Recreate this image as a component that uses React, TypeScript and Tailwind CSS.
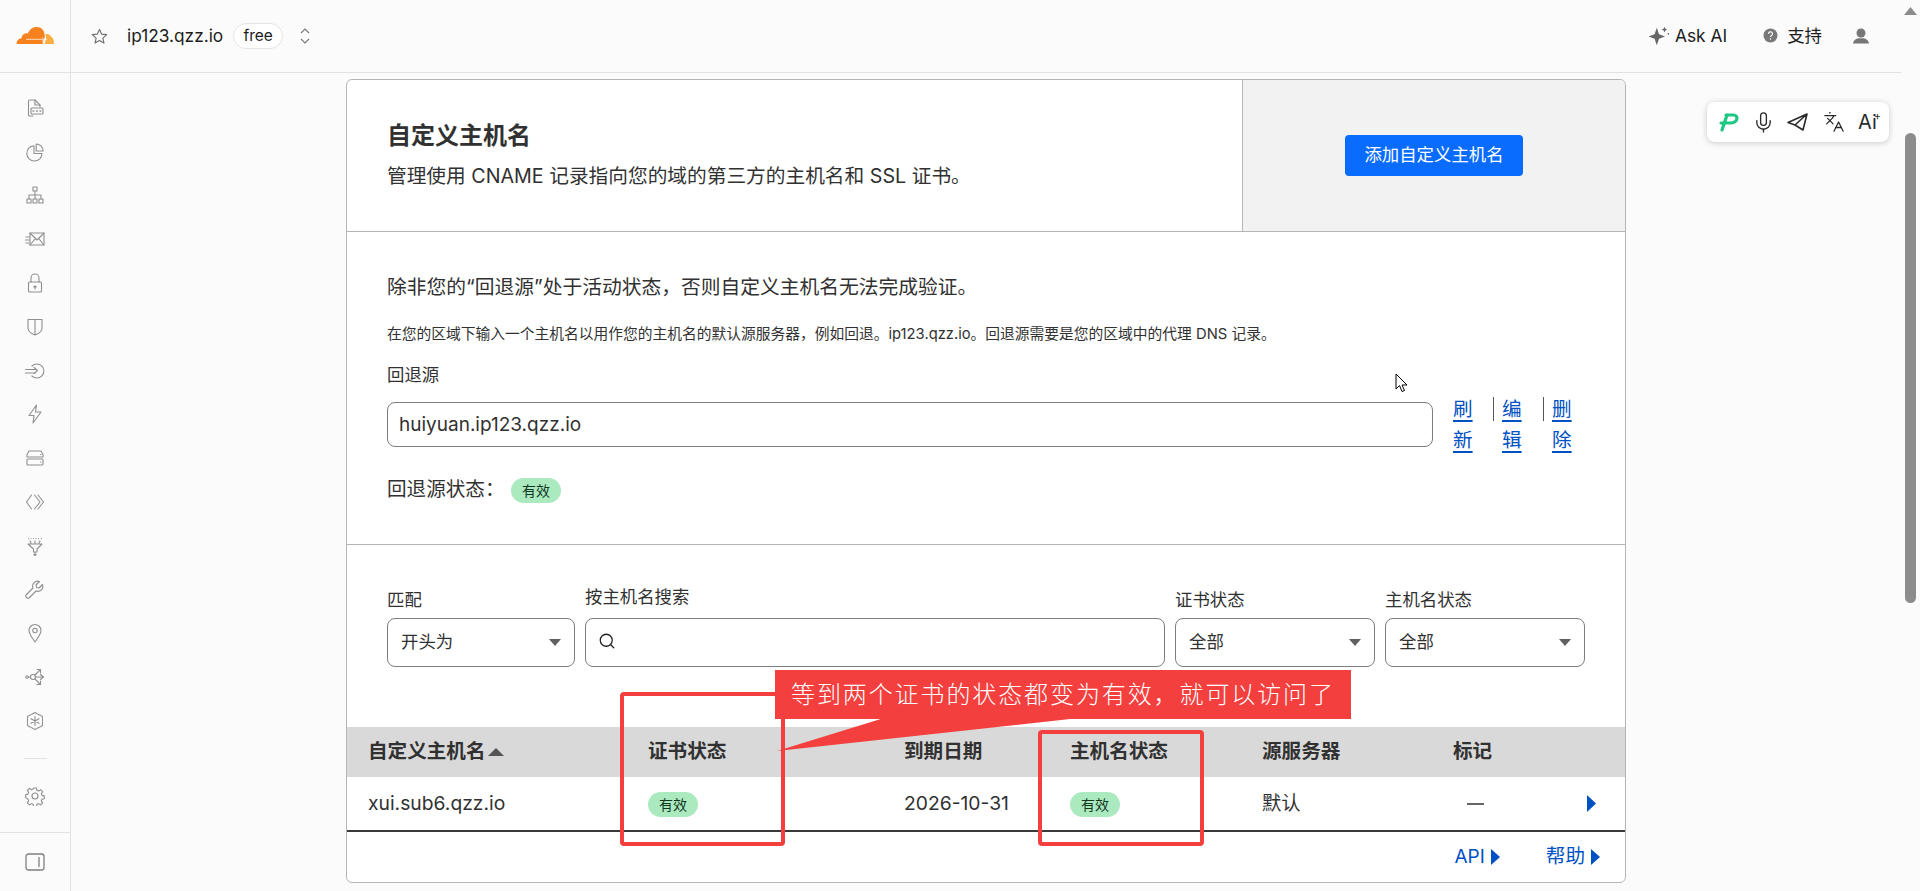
import React from "react";
import { Mic, Languages, Search } from "lucide-react";

const I = ({ children, size = 20, fill = "none" }: { children: React.ReactNode; size?: number; fill?: string }) => (
  <svg width={size} height={size} viewBox="0 0 20 20" fill={fill} stroke="#8f8f8f" strokeWidth="1.100" strokeLinecap="round" strokeLinejoin="round">
    {children}
  </svg>
);

const sideIcons: React.ReactNode[] = [
  <I key="doc"><path d="M8 18H4.500a1 1 0 0 1-1-1V3a1 1 0 0 1 1-1h5.500l5 5v2" /><path d="M10 2v5h5" /><rect x="6" y="10" width="12" height="6" rx="1" /><path d="M8 13h.8M11.500 13h.8M15 13h.8" strokeWidth="1.400" /></I>,
  <I key="pie"><path d="M9 3.800A7.600 7.600 0 1 0 17 11.500H9z" /><path d="M11.200 2a7.200 7.200 0 0 1 7 7h-7z" /></I>,
  <I key="tree"><rect x="8" y="2" width="4" height="4" /><rect x="2" y="14" width="4" height="4" /><rect x="8" y="14" width="4" height="4" /><rect x="14" y="14" width="4" height="4" /><path d="M10 6v8M4 14v-4h12v4" /></I>,
  <I key="mail"><rect x="5" y="4" width="14" height="12" /><path d="m5 4 7 7 7-7M5 16l5-6M19 16l-5-6M1 8h3M0 11h4M1 14h3" /></I>,
  <I key="lock"><rect x="3.500" y="9" width="13" height="10" rx="1" /><path d="M6 9V5a4 4 0 0 1 8 0v4M10 16v-3M8.800 14l1.200-1.200 1.200 1.200" /></I>,
  <I key="shield"><path d="M3 2.500h14v8.500c0 3.500-3.500 5.700-7 7-3.500-1.300-7-3.500-7-7zM10 2.500V18" /></I>,
  <I key="in"><path d="M7 5a7 7 0 1 1 0 10M0.500 8.500h11M0.500 12h10M9 6.500l3.500 3-3.500 3" /></I>,
  <I key="bolt"><path d="M11.500 1 4 11.500h5L8 19l8-11h-5.500z" /></I>,
  <I key="drives"><path d="M2 9V6.500L4 3h12l2 3.500V9z" /><rect x="2" y="11" width="16" height="6" rx="1" /><path d="M15.500 6.500h.5M15.500 14h.5" /></I>,
  <I key="workers"><path d="M6.500 3 1.500 10l5 7M9.500 3l5.500 7-5.500 7M13 3l5.500 7-5.500 7" /></I>,
  <I key="funnel"><path d="M3 8h14l-5 5v3H8.500v-3zM3.500 2.500v.1M6 2.500v.1M8.500 2.500v.1M11 2.500v.1M13.500 2.500v.1M16.500 2.500v.1M5 5l1 2M10 5v2M15 5l-1 2M10 16v3.500M8.800 18.500l1.200 1 1.200-1" /></I>,
  <I key="wrench"><path d="M17.500 4.500 14 8l-2.500-.5L11 5l3.500-3.500a5 5 0 0 0-6.500 6.500L1.500 14.500a2 2 0 0 0 3 3L11 11a5 5 0 0 0 6.500-6.500z" /></I>,
  <I key="pin"><path d="M10 19c-3-4.500-6-8-6-11.500a6 6 0 0 1 12 0C16 11 13 14.500 10 19z" /><circle cx="10" cy="7.500" r="2.200" /></I>,
  <I key="node"><circle cx="2" cy="10" r="1.300" /><circle cx="8" cy="10" r="2.500" /><path d="M3.500 10h2M10.500 10H18M15.500 7.500 18.500 10l-3 2.500M10 8l5-5M12 2.500h3.500V6M10 12l5 5M12 17.500h3.500V14" /></I>,
  <I key="hex"><path d="M10 1.500 17.500 5.500v9L10 18.500 2.500 14.500v-9z" strokeDasharray="2.500 1" /><path d="M10 5.500v9M6 7.700l8 4.600M14 7.700l-8 4.600" /></I>,
];

const Tri = ({ dir, cls }: { dir: "up" | "down" | "right"; cls: string }) => (
  <svg className={cls} viewBox="0 0 10 10" preserveAspectRatio="none">
    {dir === "up" && <path d="M0 10 5 0l5 10z" fill="currentColor" />}
    {dir === "down" && <path d="M0 0h10L5 10z" fill="currentColor" />}
    {dir === "right" && <path d="M0 0v10l10-5z" fill="currentColor" />}
  </svg>
);

const Badge = () => (
  <span className="inline-flex items-center justify-center w-[50px] h-[25px] rounded-full bg-[#abeabf] text-[#12361f] text-[14px]">有效</span>
);

const Select = ({ label, value, cls }: { label: string; value: string; cls: string }) => (
  <div className={cls}>
    <div className="text-[17.400px] leading-[24px] mb-[6px]">{label}</div>
    <div className="h-[49px] rounded-[8px] border border-[#7d7d7d] bg-white flex items-center justify-between pl-[13px] pr-[13px] text-[17.400px]">
      <span>{value}</span>
      <Tri dir="down" cls="w-[12px] h-[7px] text-[#5f5f5f]" />
    </div>
  </div>
);

const LinkWord = ({ a, b }: { a: string; b: string }) => (
  <a className="block w-[20px] text-[19.600px] leading-[31px] text-[#0051c3] underline decoration-[2px] underline-offset-[4px]">
    {a}
    <br />
    {b}
  </a>
);

const colCls = "grid grid-cols-[280px_256px_166px_192px_191px_1fr]";

export default function App() {
  return (
    <div className="relative flex w-[1920px] h-[891px] overflow-hidden bg-[#fbfbfb] text-[#313131] font-['Inter','Noto_Sans_CJK_SC',sans-serif]">
      {/* Sidebar */}
      <aside className="w-[71px] shrink-0 flex flex-col border-r border-[#e2e2e2]">
        <div className="h-[73px] shrink-0 border-b border-[#e2e2e2] flex items-center justify-center">
          <svg width="38" height="17" viewBox="0 0 38 17" className="mb-[2px] mr-[1px]">
            <path d="M0.500 17C0.500 13.500 2.500 11.500 5.500 11.200C5.800 8 8.300 5.600 11.800 6.600C13.500 2.500 16.500 0 20.500 0C25.500 0 28.500 3.500 28.500 8C29 9.500 28.800 11 28 12.500L26.500 17Z" fill="#f6821f" />
            <path d="M28.500 17L30 12C30.500 10 29.500 8.500 29 7.800C31 6.400 34 7 35 9.700C36.800 10.200 38 12.500 38 17Z" fill="#fbad41" />
            <path d="M10 12.300H27.500M26.200 10.500l1.300 1.800 3 .3-3 .4-1.300 2" stroke="#fff" strokeWidth="0.700" fill="none" />
          </svg>
        </div>
        <div className="flex-1 flex flex-col items-center pt-[13px]">
          {sideIcons.map((ic, i) => (
            <div key={i} className="h-[43.800px] w-full flex items-center justify-center">{ic}</div>
          ))}
          <div className="w-[23px] h-px bg-[#e2e2e2] mt-[15px]" />
          <div className="mt-[27px]">
            <I>
              <path d="M8.600 2h2.800l.5 2.300 1.700.7 2-1.300 2 2-1.300 2 .7 1.700 2.300.5v2.800l-2.300.5-.7 1.700 1.300 2-2 2-2-1.300-1.700.7-.5 2.300H8.600l-.5-2.300-1.700-.7-2 1.300-2-2 1.300-2-.7-1.700L.7 11.400V8.600L3 8.100l.7-1.700-1.300-2 2-2 2 1.300 1.700-.7z" />
              <circle cx="10" cy="10" r="3" />
            </I>
          </div>
        </div>
        <div className="h-[59px] shrink-0 border-t border-[#e2e2e2] flex items-center justify-center">
          <svg width="20" height="18" viewBox="0 0 20 18" fill="none" stroke="#7f7f7f" strokeWidth="1.300"><rect x="1" y="1" width="18" height="16" rx="2.500" /><path d="M14 4v10" /></svg>
        </div>
      </aside>

      {/* Content */}
      <div className="flex-1 min-w-0 flex flex-col">
        <header className="h-[73px] shrink-0 border-b border-[#e2e2e2] flex items-center pr-[32px]">
          <svg className="ml-[20px]" width="17" height="17" viewBox="0 0 24 24" fill="none" stroke="#6f6f6f" strokeWidth="1.600" strokeLinejoin="round"><path d="m12 2 3 6.600 7.200.8-5.400 4.800 1.500 7.100L12 17.700l-6.300 3.600 1.500-7.100L1.800 9.400 9 8.600z" /></svg>
          <span className="ml-[19px] text-[17.300px] text-[#1d1d1d]">ip123.qzz.io</span>
          <span className="ml-[10px] w-[50px] h-[26px] rounded-full border border-[#e5e5e5] bg-white text-[15.500px] flex items-center justify-center text-[#1d1d1d]">free</span>
          <svg className="ml-[17px]" width="10" height="18" viewBox="0 0 10 18" fill="none" stroke="#777" strokeWidth="1.100"><path d="m1 6 4-4 4 4M1 12l4 4 4-4" /></svg>
          <div className="ml-auto flex items-center">
            <svg width="22" height="22" viewBox="0 0 20 20" fill="#666"><path d="M8 2.500 10 8.500 15.500 10.500 10 12.500 8 18.500 6 12.500 .5 10.500 6 8.500z" /><path d="M15 1.500 15.800 3.500 17.500 4.200 15.800 4.900 15 6.800 14.200 4.900 12.500 4.200 14.200 3.500z" /><circle cx="18.500" cy="8" r=".8" /></svg>
            <span className="ml-[5px] text-[17.400px] text-[#1d1d1d]">Ask AI</span>
            <svg className="ml-[36px]" width="15" height="15" viewBox="0 0 15 15"><circle cx="7.500" cy="7.500" r="7" fill="#777" /><path d="M5.500 5.800a2 2 0 1 1 3 1.700c-.7.400-1 .7-1 1.500" stroke="#fff" strokeWidth="1.200" fill="none" /><circle cx="7.500" cy="11" r=".8" fill="#fff" /></svg>
            <span className="ml-[9px] text-[17.400px] text-[#1d1d1d]">支持</span>
            <svg className="ml-[31px]" width="16" height="16" viewBox="0 0 16 16" fill="#777"><circle cx="8" cy="5" r="4.500" /><path d="M0 15.500c.3-3 2.500-4.500 5-5.200h6c2.500.7 4.700 2.200 5 5.200z" /></svg>
          </div>
        </header>

        <main className="flex-1 min-h-0 pt-[6px] flex justify-center overflow-hidden">
          <div className="w-[1280px] h-[804px] shrink-0 rounded-[6px] border border-[#b5b5b5] bg-white overflow-hidden">
            {/* Title */}
            <section className="h-[152px] flex border-b border-[#b5b5b5]">
              <div className="flex-1 pl-[40px] pt-[40px]">
                <h1 className="text-[24px] leading-[32px] font-bold">自定义主机名</h1>
                <p className="text-[19.700px] leading-[28px] mt-[10px]">管理使用 CNAME 记录指向您的域的第三方的主机名和 SSL 证书。</p>
              </div>
              <div className="w-[383px] border-l border-[#b5b5b5] bg-[#f2f2f2] flex items-center justify-center">
                <button className="w-[178px] h-[41px] rounded-[4px] bg-[#0a6cff] text-white text-[17.400px]">添加自定义主机名</button>
              </div>
            </section>

            {/* Fallback */}
            <section className="pl-[40px] pr-[40px] pt-[41px] pb-[41px] border-b border-[#b5b5b5]">
              <p className="text-[19.750px] leading-[28px]">除非您的“回退源”处于活动状态，否则自定义主机名无法完成验证。</p>
              <p className="text-[14.750px] leading-[20px] mt-[23px]">在您的区域下输入一个主机名以用作您的主机名的默认源服务器，例如回退。ip123.qzz.io。回退源需要是您的区域中的代理 DNS 记录。</p>
              <div className="text-[17.400px] leading-[24px] mt-[19px]">回退源</div>
              <div className="flex items-start mt-[7px]">
                <input readOnly value="huiyuan.ip123.qzz.io" className="w-[1046px] h-[45px] mt-[8px] rounded-[8px] border border-[#7d7d7d] pl-[11px] text-[19px] text-[#313131]" />
                <div className="ml-[20px]"><LinkWord a="刷" b="新" /></div>
                <div className="ml-[20px] w-px h-[24px] mt-[3px] bg-[#555]" />
                <div className="ml-[8px]"><LinkWord a="编" b="辑" /></div>
                <div className="ml-[21px] w-px h-[24px] mt-[3px] bg-[#555]" />
                <div className="ml-[8px]"><LinkWord a="删" b="除" /></div>
              </div>
              <div className="flex items-center h-[26px] mt-[21px]">
                <span className="text-[19.600px] w-[124px] whitespace-nowrap">回退源状态：</span>
                <Badge />
              </div>
            </section>

            {/* Filters */}
            <section className="flex items-end gap-[10px] pl-[40px] pt-[40px]">
              <Select label="匹配" value="开头为" cls="w-[188px]" />
              <div className="w-[580px]">
                <div className="text-[17.400px] leading-[24px] mb-[9px]">按主机名搜索</div>
                <div className="h-[49px] rounded-[8px] border border-[#7d7d7d] flex items-center pl-[12px]">
                  <Search size={18} strokeWidth={1.700} className="text-[#222] mb-[3px]" />
                </div>
              </div>
              <Select label="证书状态" value="全部" cls="w-[200px]" />
              <Select label="主机名状态" value="全部" cls="w-[200px]" />
            </section>

            {/* Table */}
            <section className="mt-[60px]">
              <div className={`${colCls} h-[50px] pl-[21px] items-center bg-[#d9d9d9] text-[19.600px] font-bold`}>
                <div className="flex items-center">自定义主机名<Tri dir="up" cls="w-[16px] h-[8px] text-[#555] ml-[2px]" /></div>
                <div>证书状态</div>
                <div>到期日期</div>
                <div>主机名状态</div>
                <div>源服务器</div>
                <div>标记</div>
              </div>
              <div className={`${colCls} h-[55px] pl-[21px] items-center border-b-2 border-[#3a3a3a] text-[19.300px]`}>
                <div>xui.sub6.qzz.io</div>
                <div><Badge /></div>
                <div>2026-10-31</div>
                <div><Badge /></div>
                <div>默认</div>
                <div className="flex items-center justify-between pl-[14px] pr-[29px]">
                  <div className="w-[17px] h-[2px] bg-[#666]" />
                  <Tri dir="right" cls="w-[9px] h-[17px] text-[#0051c3]" />
                </div>
              </div>
              <div className="h-[50px] flex items-center justify-end pr-[25px] text-[#0051c3] text-[19px]">
                <span>API</span>
                <Tri dir="right" cls="w-[9px] h-[16px] ml-[6px]" />
                <span className="ml-[46px] text-[19.600px]">帮助</span>
                <Tri dir="right" cls="w-[9px] h-[16px] ml-[6px]" />
              </div>
            </section>
          </div>
        </main>
      </div>

      {/* Scrollbar */}
      <div className="w-[19px] shrink-0 flex flex-col items-center pt-[7px]">
        <Tri dir="up" cls="w-[13px] h-[8px] text-[#8c8c8c]" />
        <div className="mt-[118px] w-[11px] h-[470px] rounded-full bg-[#8c8c8c]" />
      </div>

      {/* Browser-extension toolbar */}
      <div className="absolute left-[1707px] top-[102px] w-[182px] h-[40px] rounded-[8px] bg-white shadow-[0_1px_6px_rgba(0,0,0,0.2)] flex items-center pl-[11px] text-[#2b2b2b]">
        <svg width="22" height="20" viewBox="0 0 22 20" fill="none" stroke="#1ec781" strokeWidth="3.200" strokeLinecap="round"><path d="M9 3 4 18M3 11h9c4 0 7-2 7-5 0-2-2-3-4-3H8" /></svg>
        <Mic size={23} strokeWidth={1.400} className="ml-[12px]" />
        <svg className="ml-[12px]" width="21" height="18" viewBox="0 0 21 18" fill="none" stroke="#2b2b2b" strokeWidth="1.600" strokeLinejoin="round"><path d="M20 1 1 9.500l7 2.500 8 5zM20 1 8 12" /></svg>
        <Languages size={22} strokeWidth={1.400} className="ml-[15px]" />
        <span className="ml-[13px] text-[20px] leading-none">Ai</span>
        <span className="text-[11px] -mt-[12px] -ml-[3px] leading-none">+</span>
      </div>

      {/* Cursor */}
      <svg className="absolute left-[1395px] top-[373px]" width="13" height="21" viewBox="0 0 13 21" fill="#fff" stroke="#000" strokeWidth="1"><path d="M1 1v15l3.500-3.500 2.500 6 2.500-1-2.500-5.500h5z" /></svg>

      {/* Annotation */}
      <div className="absolute left-[620px] top-[692px] w-[165px] h-[154px] border-[4px] border-[#f43f3f] rounded-[4px]" />
      <div className="absolute left-[1038px] top-[730px] w-[166px] h-[116px] border-[4px] border-[#f43f3f] rounded-[4px]" />
      <svg className="absolute left-[775px] top-[718px]" width="300" height="34" viewBox="0 0 300 34"><path d="M109 0 2 33 295 1z" fill="#f43f3f" /></svg>
      <div className="absolute left-[775px] top-[670px] w-[576px] h-[49px] bg-[#f43f3f] text-white text-[24px] font-light tracking-[1.900px] flex items-center pl-[16px] whitespace-nowrap">等到两个证书的状态都变为有效，就可以访问了</div>
    </div>
  );
}
